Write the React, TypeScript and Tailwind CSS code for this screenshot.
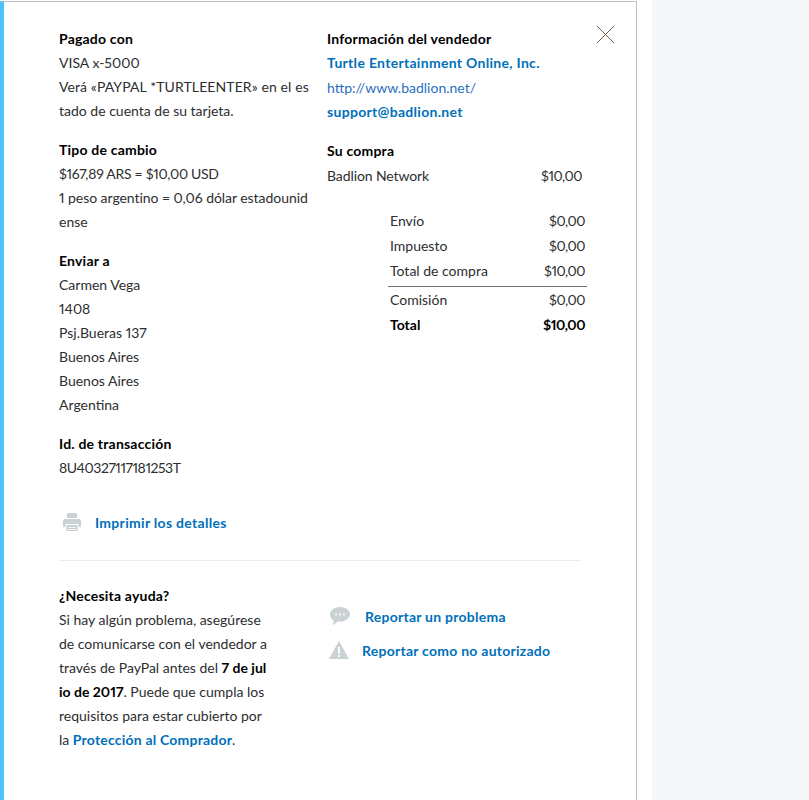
function Heading({ children }: { children: React.ReactNode }) {
  return <div className="h-6 font-bold leading-6 tracking-[0.2px] text-black">{children}</div>;
}

function Line({ children }: { children: React.ReactNode }) {
  return <div className="h-6 leading-6 whitespace-nowrap">{children}</div>;
}

function TotalRow({ label, value, bold }: { label: string; value: string; bold?: boolean }) {
  return (
    <div className={`flex h-[25px] items-center justify-between pl-[2px] pr-[2px] ${bold ? 'font-bold text-black' : ''}`}>
      <span>{label}</span>
      <span className="tracking-[-0.5px]">{value}</span>
    </div>
  );
}

function PrinterIcon() {
  return (
    <svg width="18" height="18" viewBox="0 0 18 18" fill="#cbd2d6">
      <path d="M4 0h10v5H4z" />
      <path d="M2 6h14a2 2 0 0 1 2 2v6h-2.500v-3h-13v3H0V8a2 2 0 0 1 2-2z" />
      <path d="M3.500 12h11v6h-11zM5 14v.8h8V14zM5 16v.8h8V16z" fillRule="evenodd" />
    </svg>
  );
}

function ChatIcon() {
  return (
    <svg width="20" height="18" viewBox="0 0 20 18">
      <path d="M10 0c5.500 0 10 3.200 10 7.300s-4.500 7.300-10 7.300c-.9 0-1.700-.1-2.500-.2C6.200 16 4.500 17.300 2.500 18c.8-1.200 1.200-2.600 1.200-4.400C1.500 12.300 0 10 0 7.300 0 3.200 4.500 0 10 0z" fill="#cbd2d6" />
      <circle cx="6" cy="7.500" r="1" fill="#fff" />
      <circle cx="10" cy="7.500" r="1" fill="#fff" />
      <circle cx="14" cy="7.500" r="1" fill="#fff" />
    </svg>
  );
}

function WarningIcon() {
  return (
    <svg width="20" height="18" viewBox="0 0 20 18">
      <path d="M10 0l10 18H0z" fill="#cbd2d6" />
      <path d="M9 6h2v6.500H9zM9 14h2v2H9z" fill="#fff" />
    </svg>
  );
}

export default function App() {
  return (
    <div className="flex h-[800px] w-[809px] overflow-hidden bg-white font-['Lato',sans-serif] text-[14px] text-[#2c2e2f] proportional-nums">
      <div className="relative mt-px h-[799px] w-[637px] shrink-0 border-t border-r border-l-4 border-t-[#b9c0c5] border-r-[#b9c0c5] border-l-[#4dc3ff] pl-[55px] pt-[25px]">
        <div className="flex">
          <div className="w-[268px] shrink-0">
            <Heading>Pagado con</Heading>
            <Line>VISA x-5000</Line>
            <Line><span className="tracking-[0.1px]">Verá «PAYPAL *TURTLEENTER» en el es</span></Line>
            <Line>tado de cuenta de su tarjeta.</Line>
            <div className="mt-[15px]">
              <Heading>Tipo de cambio</Heading>
              <Line><span className="tracking-[-0.3px]">$167,89 ARS = $10,00 USD</span></Line>
              <Line><span className="tracking-[-0.05px]">1 peso argentino = 0,06 dólar estadounid</span></Line>
              <Line>ense</Line>
            </div>
            <div className="mt-[15px]">
              <Heading>Enviar a</Heading>
              <Line>Carmen Vega</Line>
              <Line>1408</Line>
              <Line>Psj.Bueras 137</Line>
              <Line>Buenos Aires</Line>
              <Line>Buenos Aires</Line>
              <Line>Argentina</Line>
            </div>
            <div className="mt-[15px]">
              <Heading>Id. de transacción</Heading>
              <Line><span className="tracking-[-0.45px]">8U40327117181253T</span></Line>
            </div>
          </div>
          <div className="w-[260px]">
            <Heading>Información del vendedor</Heading>
            <Line><span className="font-bold tracking-[0.3px] text-[#0070ba]">Turtle Entertainment Online, Inc.</span></Line>
            <div className="mt-px"><Line><span className="text-[#2a6fc0]">http://www.badlion.net/</span></Line></div>
            <Line><span className="font-bold tracking-[0.3px] text-[#0070ba]">support@badlion.net</span></Line>
            <div className="mt-[15px]">
              <Heading>Su compra</Heading>
              <div className="flex h-6 w-[255px] items-center justify-between">
                <span className="tracking-[-0.1px]">Badlion Network</span>
                <span className="tracking-[-0.5px]">$10,00</span>
              </div>
            </div>
            <div className="ml-[61px] mt-[21px] w-[199px]">
              <TotalRow label="Envío" value="$0,00" />
              <TotalRow label="Impuesto" value="$0,00" />
              <TotalRow label="Total de compra" value="$10,00" />
              <div className="mt-[3px] border-t border-[#6c7378]" />
              <div>
                <TotalRow label="Comisión" value="$0,00" />
                <TotalRow label="Total" value="$10,00" bold />
              </div>
            </div>
          </div>
        </div>

        <div className="mt-[30px] flex h-6 items-center font-bold tracking-[0.3px] text-[#0070ba]">
          <span className="ml-1 w-[32px]"><PrinterIcon /></span>
          <span>Imprimir los detalles</span>
        </div>

        <div className="mt-[26px] w-[522px] border-t border-[#eaeced]" />

        <div className="mt-[23px] flex">
          <div className="w-[268px] shrink-0">
            <Heading>¿Necesita ayuda?</Heading>
            <Line>Si hay algún problema, asegúrese</Line>
            <Line>de comunicarse con el vendedor a</Line>
            <Line>través de PayPal antes del <b className="text-black">7 de jul</b></Line>
            <Line><b className="text-black">io de 2017</b>. Puede que cumpla los</Line>
            <Line>requisitos para estar cubierto por</Line>
            <Line>la <b className="tracking-[0.2px] text-[#0070ba]">Protección al Comprador</b>.</Line>
          </div>
          <div className="pt-[20px] font-bold tracking-[0.25px] text-[#0070ba]">
            <div className="flex h-6 items-center">
              <span className="ml-[3px] w-[35px]"><ChatIcon /></span>
              <span>Reportar un problema</span>
            </div>
            <div className="mt-[10px] flex h-6 items-center">
              <span className="ml-[2px] w-[33px]"><WarningIcon /></span>
              <span>Reportar como no autorizado</span>
            </div>
          </div>
        </div>

        <button className="absolute right-[21px] top-[23px]" aria-label="Cerrar">
          <svg width="19" height="19" viewBox="0 0 19 19" stroke="#6f5c42" strokeWidth="1" fill="none" className="block">
            <path d="M1 1l17 17M18 1L1 18" />
          </svg>
        </button>
      </div>
      <div className="w-[15px] shrink-0" />
      <div className="flex-1 bg-[#f5f7fa]" />
    </div>
  );
}
